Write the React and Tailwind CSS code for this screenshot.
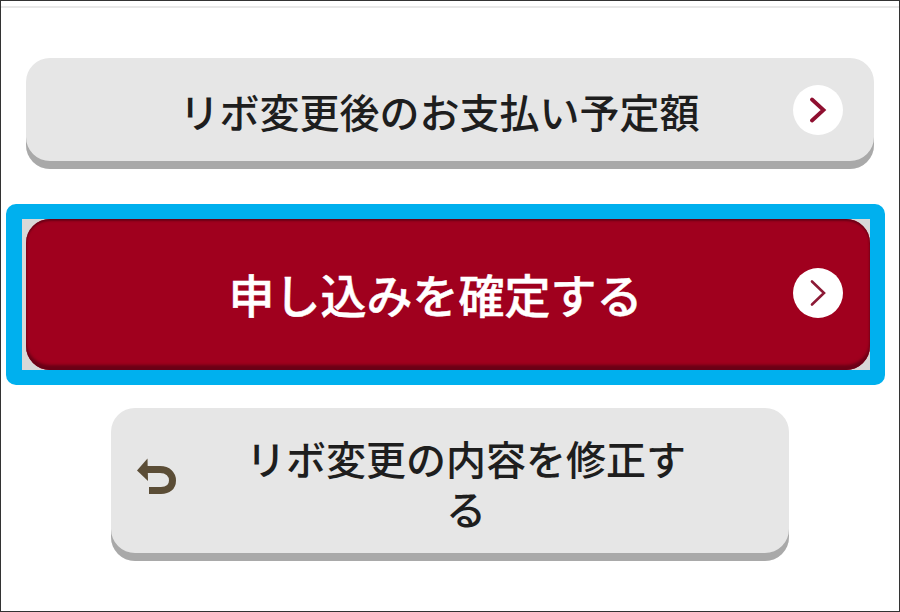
export default function App() {
  return (
    <div className="h-[612px] w-[900px] overflow-hidden bg-white border border-[#333] font-['Noto_Sans_CJK_JP','Noto_Sans',sans-serif] text-[#1e1e1e]">
      <div className="mt-[5px] h-[2px] bg-[#e8e8e8]" />

      {/* Payment amount */}
      <div className="mx-[25px] mt-[50px] flex h-[111px] items-center rounded-[24px] bg-[#e6e6e6] pb-[6px] pr-[31px] shadow-[inset_0_-8px_0_#a9a9a9]">
        <span className="flex-1 pl-[60px] text-center text-[40px] leading-[50px] font-medium">
          リボ変更後のお支払い予定額
        </span>
        <span className="mb-[2px] flex h-[50px] w-[50px] items-center justify-center rounded-full bg-white text-[#8f0f30]">
          <svg width="20" height="26" viewBox="0 0 20 26" fill="none">
            <path d="M4 2.500 L15.500 13 L4 23.500" stroke="currentColor" strokeWidth="3.800" strokeLinecap="round" />
          </svg>
        </span>
      </div>

      {/* Confirm, highlighted */}
      <div className="ml-[5px] mr-[14px] mt-[35px] h-[181px] rounded-[10px] border-[15px] border-l-[16px] border-[#00b0ee] bg-[#d8d8d8]">
        <div className="ml-[4px] flex h-full items-center rounded-[24px] bg-[#a0001e] pb-[4px] pr-[27px] shadow-[inset_0_-5px_3px_#6a0016,inset_0_2px_2px_#6a0016]">
          <span className="flex-1 pl-[52px] text-center text-[46px] leading-[56px] font-medium text-white [-webkit-text-stroke:0.5px_white]">
            申し込みを確定する
          </span>
          <span className="flex h-[50px] w-[50px] items-center justify-center rounded-full bg-white text-[#8c1a36]">
            <svg width="20" height="28" viewBox="0 0 20 28" fill="none">
              <path d="M4 2.500 L16 14 L4 25.500" stroke="currentColor" strokeWidth="2.600" strokeLinecap="round" />
            </svg>
          </span>
        </div>
      </div>

      {/* Back to edit */}
      <div className="mx-[110px] mt-[23px] flex h-[153px] items-center rounded-[24px] bg-[#e6e6e6] pb-[8px] shadow-[inset_0_-8px_0_#a9a9a9]">
        <svg width="42" height="38" viewBox="0 0 42 38" className="ml-[25px] mb-[8px] shrink-0 text-[#5b4d36]" fill="none">
          <path d="M11.500 0.500 L1 12.500 L12 23 Z" fill="currentColor" />
          <path d="M10 11.500 H24 C32 11.500 36.500 16.500 36.500 22.500 C36.500 29 32 32.500 25 32.500 H13" stroke="currentColor" strokeWidth="7" />
        </svg>
        <span className="ml-[63px] mt-[4px] w-[450px] pl-[5px] pr-[5px] text-center text-[40px] leading-[50px] font-medium">
          リボ変更の内容を修正する
        </span>
      </div>
    </div>
  );
}
